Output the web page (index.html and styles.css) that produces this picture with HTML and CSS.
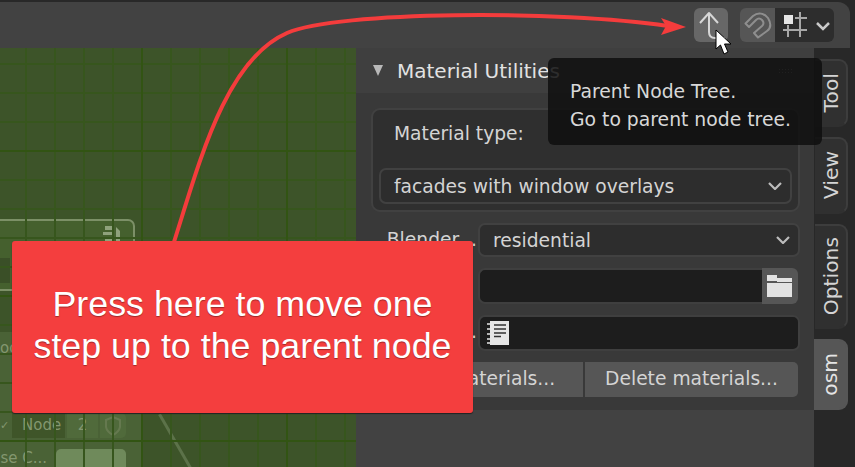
FILE: index.html
```html
<!DOCTYPE html>
<html>
<head>
<title>Parent Node Tree</title>
<link rel="stylesheet" href="styles.css">
</head>
<body>

<div class="app">

  <header class="topbar">
    <button class="up-button">
      <svg width="34" height="34" viewBox="0 0 34 34"><path d="M6 15 L15 5 L24 15 M15 5 V24 Q15 30 21 30 H31" fill="none" stroke="#d6d6d6" stroke-width="2" stroke-linejoin="round"/></svg>
    </button>
    <div class="snap-group">
      <div class="snap-toggle">
        <svg width="35" height="34" viewBox="0 0 35 34"><path d="M5.5 15.5 L13 8 C18 4 24 5 28 10 C31 15 31 20 27 23 L18 29.5 L14 25 L22 18 C24 16 24 14 22 12 C20 10 18 10 16 12 L9 19 Z" fill="none" stroke="#8e8e8e" stroke-width="2" stroke-linejoin="round"/></svg>
      </div>
      <div class="snap-menu">
        <svg width="59" height="34" viewBox="0 0 59 34">
          <rect x="9" y="7" width="9" height="9" fill="#e6e6e6"/>
          <path d="M20 10 H32 M8 22 H32 M13 17 V29 M25 4 V29" fill="none" stroke="#a8a8a8" stroke-width="2"/>
          <path d="M42 15 L48 21 L54 15" fill="none" stroke="#c8c8c8" stroke-width="2.5"/>
        </svg>
      </div>
    </div>
  </header>

  <main class="workspace">

    <section class="node-canvas">
      <div class="node-frame">
        <svg class="frame-icon" width="18" height="17" viewBox="0 0 18 17"><path d="M2 0 H11 V4 H2 Z M0 6 H11 V9 H0 Z M2 11 H11 V15 H2 Z M13 1 L17 5 V15 H13 Z" fill="#8fa27c"/></svg>
        <div class="frame-field"></div>
      </div>
      <div class="node-body">
        <div class="node-row node-label">oo</div>
        <div class="node-row node-row-main">
          <span class="node-check">&#10003;</span>
          <span class="node-name">Node</span>
          <span class="node-users">2</span>
          <span class="node-shield">
            <svg width="18" height="22" viewBox="0 0 18 22"><path d="M9 2 L16 5 V12 Q15 17 9 20 Q3 17 2 12 V5 Z" fill="none" stroke="#65794f" stroke-width="2"/></svg>
          </span>
        </div>
        <div class="node-row node-row-last">
          <span class="node-use">se C...</span>
          <span class="node-swatch"></span>
        </div>
      </div>
      <div class="node-link"></div>
    </section>

    <aside class="sidebar">
      <div class="panel-header">
        <span class="panel-arrow"></span>
        <span>Material Utilities</span>
        <span class="panel-grip"></span>
      </div>
      <div class="panel-body">
        <div class="type-box">
          <div class="type-label">Material type:</div>
          <div class="dropdown">
            <span>facades with window overlays</span>
            <svg class="chevron" width="14" height="8" viewBox="0 0 14 8"><path d="M1 1 L7 7 L13 1" fill="none" stroke="#bcbcbc" stroke-width="2.2"/></svg>
          </div>
        </div>

        <div class="prop-row">
          <span class="prop-label">Blender ..</span>
          <div class="dropdown prop-field">
            <span>residential</span>
            <svg class="chevron" width="14" height="8" viewBox="0 0 14 8"><path d="M1 1 L7 7 L13 1" fill="none" stroke="#bcbcbc" stroke-width="2.2"/></svg>
          </div>
        </div>

        <div class="prop-row">
          <span class="prop-label"></span>
          <div class="path-field">
            <div class="text-input"></div>
            <div class="folder-button">
              <svg width="26" height="24" viewBox="0 0 26 24"><path d="M0 0 H10 V6 H0 Z M10 3 H25 V7 H10 Z M0 8 H25 V22 H0 Z" fill="#e2e2e2"/></svg>
            </div>
          </div>
        </div>

        <div class="prop-row">
          <span class="prop-label">..</span>
          <div class="text-input text-input-wide">
            <svg width="22" height="24" viewBox="0 0 22 24">
              <path d="M3 0 H22 V24 H3 Z" fill="#e6e6e6"/>
              <path d="M0 3 H4 M0 8 H4 M0 13 H4 M0 18 H4 M0 22 H4" stroke="#e6e6e6" stroke-width="1.5"/>
              <path d="M7 4 H19 M7 8 H19 M7 12 H19 M7 15.5 H14" stroke="#333" stroke-width="1.6"/>
            </svg>
          </div>
        </div>

        <div class="button-row">
          <div class="panel-button">Load materials...</div>
          <div class="panel-button">Delete materials...</div>
        </div>
      </div>
    </aside>

    <nav class="tabs">
      <div class="tab"><span>Tool</span></div>
      <div class="tab"><span>View</span></div>
      <div class="tab"><span>Options</span></div>
      <div class="tab tab-active"><span>osm</span></div>
    </nav>

  </main>

  <!-- Annotation layer -->
  <div class="tooltip">
    <div>Parent Node Tree.</div>
    <div>Go to parent node tree.</div>
  </div>

  <svg class="annotation" width="855" height="467" viewBox="0 0 855 467">
    <path d="M174 242 C 199 164, 225 60, 287 33 C 337 11, 560 10, 668 26" fill="none" stroke="#f43c3c" stroke-width="4"/>
    <path d="M686 27 L661 18 L666 26 L661 35 Z" fill="#f43c3c"/>
    <path d="M716 30 V49 L720.5 45 L724 54 L728 52 L724.5 44 L731 44 Z" fill="#fff" stroke="#000" stroke-width="1"/>
  </svg>

  <div class="callout">Press here to move one<br>step up to the parent node</div>

</div>

</body>
</html>
```

FILE: styles.css
```css
* {
  box-sizing: border-box;
}

body {
  margin: 0;
  background-color: #282828;
  font-family: "DejaVu Sans", sans-serif;
  overflow: hidden;
}

.app {
  width: 855px;
  height: 467px;
  position: relative;
  display: flex;
  flex-direction: column;
  overflow: hidden;
  padding-top: 2px;
}

/* Top bar */
.topbar {
  height: 46px;
  margin-right: 5px;
  padding: 6px 16px 0 0;
  display: flex;
  justify-content: flex-end;
  align-items: flex-start;
  gap: 12px;
  background-color: #424242;
  border-top-right-radius: 12px;
}

.up-button {
  width: 34px;
  height: 34px;
  padding: 0;
  border: none;
  border-radius: 6px;
  background-color: #676767;
}

.up-button svg,
.snap-toggle svg,
.snap-menu svg {
  display: block;
}

.snap-group {
  display: flex;
  height: 34px;
  border-radius: 6px;
  overflow: hidden;
}

.snap-toggle {
  width: 35px;
  background-color: #565656;
}

.snap-menu {
  width: 59px;
  background-color: #2d2d2d;
}

/* Main area */
.workspace {
  flex: 1;
  display: flex;
  min-height: 0;
}

.node-canvas {
  width: 356px;
  position: relative;
  overflow: hidden;
  background-color: #3d5429;
}

/* grid lies over the nodes */
.node-canvas::after {
  content: "";
  position: absolute;
  inset: 0;
  pointer-events: none;
  background-image:
    linear-gradient(to right, #325413 2px, transparent 2px),
    linear-gradient(to bottom, #325413 2px, transparent 2px),
    linear-gradient(to right, #37561d 2px, transparent 2px),
    linear-gradient(to bottom, #37561d 2px, transparent 2px);
  background-size: 145px 145px, 145px 145px, 29px 29px, 29px 29px;
  background-position: 141px 0, 0 102px, 25px 0, 0 15px;
}

.node-frame {
  position: absolute;
  left: -10px;
  top: 171px;
  width: 145px;
  height: 72px;
  border: 2px solid #7c9067;
  border-radius: 7px;
  background-color: #45602e;
}

.frame-icon {
  position: absolute;
  right: 12px;
  top: 5px;
}

.frame-field {
  position: absolute;
  left: 0;
  top: 37px;
  width: 18px;
  height: 25px;
  background-color: #3a4f27;
}

.node-body {
  position: absolute;
  left: 0;
  top: 284px;
  width: 143px;
  height: 135px;
  display: flex;
  flex-direction: column;
  background-color: #4a6236;
}

.node-row {
  display: flex;
  align-items: center;
  flex-shrink: 0;
  color: #83976f;
  font-size: 15px;
  height: 25px;
  gap: 2px;
}

.node-label {
  margin-top: 3px;
}

.node-row-main {
  margin-top: auto;
}

.node-row-last {
  height: 18px;
  margin-top: 11px;
  gap: 9px;
  overflow: hidden;
}

.node-check {
  width: 10px;
  font-size: 11px;
}

.node-name {
  width: 53px;
  height: 25px;
  padding-left: 10px;
  line-height: 25px;
  background-color: #3f5529;
}

.node-users {
  width: 31px;
  height: 25px;
  text-align: center;
  line-height: 25px;
  background-color: #506a3b;
}

.node-shield {
  width: 26px;
  height: 25px;
  display: flex;
  align-items: center;
  justify-content: center;
  background-color: #506a3b;
  border-radius: 0 5px 5px 0;
}

.node-use {
  width: 47px;
  height: 18px;
  text-align: right;
  white-space: nowrap;
  line-height: 18px;
}

.node-swatch {
  width: 70px;
  height: 18px;
  background-color: #6f8a5b;
  border-radius: 5px 5px 0 0;
}

.node-link {
  position: absolute;
  left: 174px;
  top: 362px;
  width: 3px;
  height: 64px;
  background-color: #5c7249;
  transform: rotate(-30deg);
}

/* Sidebar panel */
.sidebar {
  flex: 1;
  background-color: #424242;
}

.panel-header {
  height: 45px;
  padding-left: 17px;
  display: flex;
  align-items: center;
  gap: 14px;
  background-color: #3f3f3f;
  color: #e2e2e2;
  font-size: 20px;
}

.panel-arrow {
  width: 0;
  height: 0;
  border-left: 5.5px solid transparent;
  border-right: 5.5px solid transparent;
  border-top: 11px solid #b8b8b8;
}

.panel-grip {
  width: 15px;
  height: 6px;
  margin-left: auto;
  margin-right: 21px;
  background-image: radial-gradient(#8a8a8a 1px, transparent 1px);
  background-size: 3px 3px;
}

.panel-body {
  height: 317px;
  padding: 15px 14px 0 15px;
  background-color: #393939;
  color: #d4d4d4;
  font-size: 18.7px;
}

.type-box {
  height: 104px;
  padding: 12px 6px 0 6px;
  border: 2px solid #414141;
  border-radius: 9px;
  background-color: #2f2f2f;
}

.type-label {
  height: 46px;
  padding-left: 15px;
  line-height: 24px;
}

.dropdown {
  height: 36px;
  padding: 0 8px 0 13px;
  display: flex;
  align-items: center;
  justify-content: space-between;
  border: 2px solid #414141;
  border-radius: 7px;
  background-color: #2d2d2d;
}

.prop-row {
  margin-top: 11px;
  padding-left: 14px;
  display: flex;
}

.prop-label {
  width: 93px;
  padding-right: 1px;
  line-height: 34px;
  white-space: nowrap;
  text-align: right;
  overflow: hidden;
}

.prop-field {
  flex: 1;
  height: 34px;
}

.path-field {
  flex: 1;
  height: 36px;
  margin-right: 2px;
  display: flex;
}

.text-input {
  flex: 1;
  height: 36px;
  border: 2px solid #3f3f3f;
  border-right: none;
  border-radius: 7px 0 0 7px;
  background-color: #1d1d1d;
}

.text-input-wide {
  padding-left: 7px;
  display: flex;
  align-items: center;
  border-right: 2px solid #3f3f3f;
  border-radius: 7px;
}

.folder-button {
  width: 36px;
  padding: 7px 0 0 5px;
  background-color: #565656;
  border-radius: 0 6px 6px 0;
}

.button-row {
  margin-top: 11px;
  margin-right: 2px;
  display: flex;
  gap: 2px;
}

.panel-button {
  flex: 1;
  height: 35px;
  line-height: 34px;
  text-align: center;
  white-space: nowrap;
  background-color: #565656;
  border-radius: 5px;
}

.panel-button:first-child {
  border-radius: 5px 0 0 5px;
}

.panel-button:last-child {
  flex: 0 0 213px;
  border-radius: 0 5px 5px 0;
}

/* Side tabs */
.tabs {
  width: 41px;
  padding: 11px 7px 0 1px;
  display: flex;
  flex-direction: column;
  gap: 10px;
  background-color: #282828;
}

.tab {
  display: flex;
  align-items: center;
  justify-content: center;
  border: 2px solid #3d3d3d;
  border-left: none;
  border-bottom-color: #303030;
  border-radius: 0 9px 9px 0;
  background-color: #303030;
  color: #d4d4d4;
  font-size: 20.3px;
  line-height: 24px;
}

.tab:nth-child(1) {
  height: 68px;
}

.tab:nth-child(2) {
  height: 77px;
}

.tab:nth-child(3) {
  height: 105px;
}

.tab:nth-child(4) {
  height: 71px;
}

.tab span {
  writing-mode: vertical-rl;
  transform: rotate(180deg);
}

.tab-active {
  margin-left: -1px;
  border-color: #565656;
  background-color: #565656;
  color: #e4e4e4;
}

/* Overlays */
.tooltip {
  position: absolute;
  left: 548px;
  top: 58px;
  width: 274px;
  height: 87px;
  padding: 20px 0 0 22px;
  border-radius: 6px;
  background-color: rgba(15, 15, 15, 0.86);
  color: #d8d8d8;
  font-size: 18.8px;
  line-height: 28px;
}

.annotation {
  position: absolute;
  left: 0;
  top: 0;
  pointer-events: none;
}

.callout {
  position: absolute;
  left: 12px;
  top: 241px;
  width: 461px;
  height: 172px;
  padding-bottom: 5px;
  display: flex;
  align-items: center;
  justify-content: center;
  text-align: center;
  border-radius: 3px;
  background-color: #f43e3e;
  box-shadow: 0 1px 1px #222;
  color: #fff;
  font-family: "Liberation Sans", Arial, sans-serif;
  font-size: 35.8px;
  line-height: 42px;
  text-shadow: 0 1px 1px rgba(0, 0, 0, 0.35);
}
```
